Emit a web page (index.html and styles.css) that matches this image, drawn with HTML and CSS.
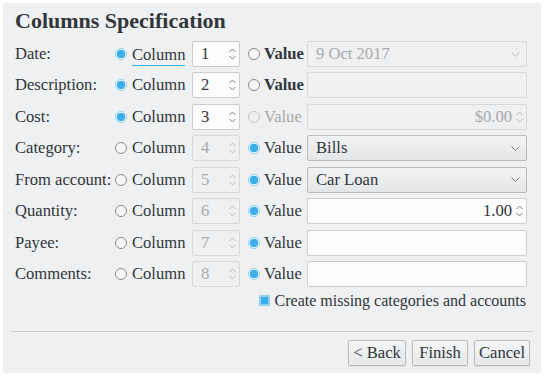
FILE: index.html
```html
<!DOCTYPE html>
<html lang="en">
<head>
    <meta charset="UTF-8">
    <title>Columns Specification</title>
    <link rel="stylesheet" href="styles.css">
</head>
<body>
<div class="window">
    <h1>Columns Specification</h1>

    <div class="grid">
        <!-- Date -->
        <div class="label">Date:</div>
        <div class="radio-cell"><span class="radio on"></span><span class="focus">Column</span></div>
        <div class="spin">1<span class="arrows"><svg width="7" height="12" viewBox="0 0 7 12"><polyline points="0.5,4 3.5,1 6.5,4"/><polyline points="0.5,8 3.5,11 6.5,8"/></svg></span></div>
        <div class="radio-cell value"><span class="radio"></span><b>Value</b></div>
        <div class="combo disabled">9 Oct 2017<svg class="chev" width="9" height="5" viewBox="0 0 9 5"><polyline points="0.5,0.5 4.5,4.5 8.5,0.5"/></svg></div>

        <!-- Description -->
        <div class="label">Description:</div>
        <div class="radio-cell"><span class="radio on"></span>Column</div>
        <div class="spin">2<span class="arrows"><svg width="7" height="12" viewBox="0 0 7 12"><polyline points="0.5,4 3.5,1 6.5,4"/><polyline points="0.5,8 3.5,11 6.5,8"/></svg></span></div>
        <div class="radio-cell value"><span class="radio"></span><b>Value</b></div>
        <div class="field disabled"></div>

        <!-- Cost -->
        <div class="label">Cost:</div>
        <div class="radio-cell"><span class="radio on"></span>Column</div>
        <div class="spin">3<span class="arrows"><svg width="7" height="12" viewBox="0 0 7 12"><polyline points="0.5,4 3.5,1 6.5,4"/><polyline points="0.5,8 3.5,11 6.5,8"/></svg></span></div>
        <div class="radio-cell value muted"><span class="radio off"></span>Value</div>
        <div class="field disabled right">$0.00<span class="arrows"><svg width="7" height="12" viewBox="0 0 7 12"><polyline points="0.5,4 3.5,1 6.5,4"/><polyline points="0.5,8 3.5,11 6.5,8"/></svg></span></div>

        <!-- Category -->
        <div class="label">Category:</div>
        <div class="radio-cell"><span class="radio"></span>Column</div>
        <div class="spin disabled">4<span class="arrows"><svg width="7" height="12" viewBox="0 0 7 12"><polyline points="0.5,4 3.5,1 6.5,4"/><polyline points="0.5,8 3.5,11 6.5,8"/></svg></span></div>
        <div class="radio-cell value"><span class="radio on"></span>Value</div>
        <div class="combo">Bills<svg class="chev" width="9" height="5" viewBox="0 0 9 5"><polyline points="0.5,0.5 4.5,4.5 8.5,0.5"/></svg></div>

        <!-- From account -->
        <div class="label">From account:</div>
        <div class="radio-cell"><span class="radio"></span>Column</div>
        <div class="spin disabled">5<span class="arrows"><svg width="7" height="12" viewBox="0 0 7 12"><polyline points="0.5,4 3.5,1 6.5,4"/><polyline points="0.5,8 3.5,11 6.5,8"/></svg></span></div>
        <div class="radio-cell value"><span class="radio on"></span>Value</div>
        <div class="combo">Car Loan<svg class="chev" width="9" height="5" viewBox="0 0 9 5"><polyline points="0.5,0.5 4.5,4.5 8.5,0.5"/></svg></div>

        <!-- Quantity -->
        <div class="label">Quantity:</div>
        <div class="radio-cell"><span class="radio"></span>Column</div>
        <div class="spin disabled">6<span class="arrows"><svg width="7" height="12" viewBox="0 0 7 12"><polyline points="0.5,4 3.5,1 6.5,4"/><polyline points="0.5,8 3.5,11 6.5,8"/></svg></span></div>
        <div class="radio-cell value"><span class="radio on"></span>Value</div>
        <div class="field right">1.00<span class="arrows"><svg width="7" height="12" viewBox="0 0 7 12"><polyline points="0.5,4 3.5,1 6.5,4"/><polyline points="0.5,8 3.5,11 6.5,8"/></svg></span></div>

        <!-- Payee -->
        <div class="label">Payee:</div>
        <div class="radio-cell"><span class="radio"></span>Column</div>
        <div class="spin disabled">7<span class="arrows"><svg width="7" height="12" viewBox="0 0 7 12"><polyline points="0.5,4 3.5,1 6.5,4"/><polyline points="0.5,8 3.5,11 6.5,8"/></svg></span></div>
        <div class="radio-cell value"><span class="radio on"></span>Value</div>
        <div class="field"></div>

        <!-- Comments -->
        <div class="label">Comments:</div>
        <div class="radio-cell"><span class="radio"></span>Column</div>
        <div class="spin disabled">8<span class="arrows"><svg width="7" height="12" viewBox="0 0 7 12"><polyline points="0.5,4 3.5,1 6.5,4"/><polyline points="0.5,8 3.5,11 6.5,8"/></svg></span></div>
        <div class="radio-cell value"><span class="radio on"></span>Value</div>
        <div class="field"></div>
    </div>

    <div class="check-row"><span class="checkbox"></span>Create missing categories and accounts</div>

    <hr class="sep">

    <div class="buttons">
        <button class="back">&lt; Back</button>
        <button>Finish</button>
        <button>Cancel</button>
    </div>
</div>
</body>
</html>
```

FILE: styles.css
```css
body {
    margin: 0;
    background: #ffffff;
    font-family: "Liberation Serif", "DejaVu Serif", serif;
    font-size: 16.6px;
    color: #31363b;
}

.window {
    margin: 3px;
    width: 526px;
    height: 370px;
    background: #eff0f1;
    padding: 0 0 0 12px;
}

h1 {
    margin: 0;
    padding-top: 5px;
    height: 38px;
    box-sizing: border-box;
    font-size: 22px;
    font-weight: bold;
    line-height: 26px;
}

.grid {
    display: grid;
    grid-template-columns: 99px 78px 48px 67px 220px;
    grid-auto-rows: 26px;
    row-gap: 5.43px;
    align-items: center;
}

.label { line-height: 26px; }

.radio-cell {
    display: flex;
    align-items: center;
    gap: 5px;
    height: 26px;
    padding-left: 1px;
}
.radio-cell.value { padding-left: 8px; gap: 4px; }
.radio-cell.muted { color: #a7a9ab; }
.radio-cell b { font-weight: bold; }

.focus {
    border-bottom: 1px solid #3daee9;
    line-height: 20px;
    margin-top: 3px;
}

.radio {
    width: 10px;
    height: 10px;
    border: 1px solid #8a8c8e;
    border-radius: 50%;
    background: #f6f7f7;
    flex: none;
}
.radio.on {
    border-color: #93d0f1;
    background: radial-gradient(circle, #3daee9 0, #3daee9 4px, #ffffff 4.6px);
}
.radio.off { border-color: #c4c6c8; background: transparent; }

.spin, .field, .combo {
    height: 26px;
    box-sizing: border-box;
    border: 1px solid #cbcdcf;
    border-radius: 2px;
    background: #fcfcfc;
    display: flex;
    align-items: center;
    padding: 0 6px 0 8px;
}
.spin { justify-content: space-between; padding-right: 3px; }
.spin.disabled, .field.disabled {
    background: #eff0f1;
    color: #a7a9ab;
    border-color: #d6d8da;
}
.field.right { justify-content: flex-end; gap: 4px; padding-right: 3px; }

.arrows { display: flex; align-items: center; }
.arrows svg polyline, .chev polyline {
    fill: none;
    stroke: #7b7e81;
    stroke-width: 1;
}
.disabled .arrows svg polyline, .disabled .chev polyline { stroke: #b9bbbd; }

.combo {
    justify-content: space-between;
    background: linear-gradient(#f2f3f4, #e4e6e8);
    border-color: #b9bbbd;
}
.combo.disabled {
    background: #eff0f1;
    border-color: #d6d8da;
    color: #a7a9ab;
}

.check-row {
    display: flex;
    justify-content: flex-end;
    align-items: center;
    gap: 5px;
    width: 511px;
    margin-top: 2px;
    height: 24px;
    font-size: 16px;
}
.checkbox {
    width: 7px;
    height: 7px;
    border: 2px solid #93d0f1;
    background: #3daee9;
    border-radius: 1px;
}

.sep {
    margin: 18px 0 0 -4px;
    width: 522px;
    border: none;
    border-top: 1px solid #c8cacc;
    height: 0;
}

.buttons {
    display: flex;
    justify-content: flex-end;
    gap: 6px;
    width: 515px;
    margin-top: 8px;
}
button {
    font-family: inherit;
    font-size: 16.6px;
    color: #31363b;
    height: 26px;
    min-width: 56px;
    padding: 0 3px;
    border: 1px solid #b9bbbd;
    border-radius: 2px;
    background: linear-gradient(#f4f5f6, #e6e8ea);
    box-shadow: 0 1px 1px rgba(0, 0, 0, 0.08);
}
button.back { min-width: 58px; }
```
